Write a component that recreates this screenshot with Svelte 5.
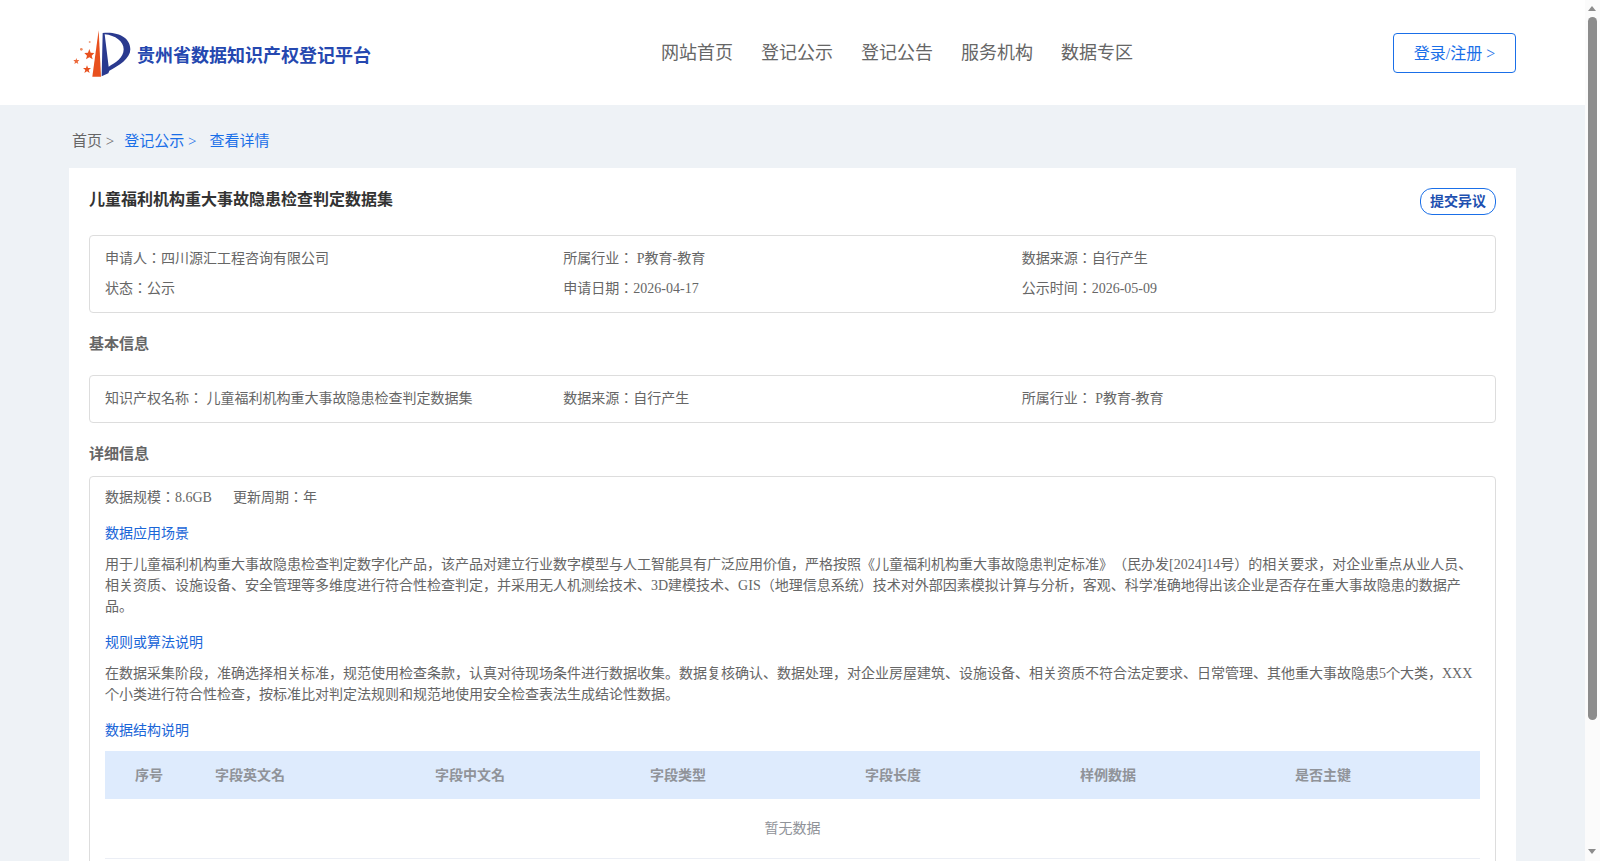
<script lang="ts">
	const navItems = ['网站首页', '登记公示', '登记公告', '服务机构', '数据专区'];
	const columns = ['序号', '字段英文名', '字段中文名', '字段类型', '字段长度', '样例数据', '是否主键'];
</script>

<div class="page">
	<header class="header">
		<div class="brand">
			<svg class="logo" viewBox="20 20 180 150" width="60" height="50" aria-hidden="true">
				<path d="M100 27 L107 166 L81 166 Z" fill="#e8501e" />
				<path d="M112 35 C160 30 195 50 195 84 C195 112 160 134 132 148 L129 156 L109 165 Z M118 39 L130 136 C150 124 175 110 175 84 C175 60 150 42 118 39 Z" fill="#2a3a8f" fill-rule="evenodd" />
				<path d="M72 83 L76 94 L87 95 L79 103 L82 114 L72 108 L62 114 L65 103 L57 95 L68 94 Z" fill="#e8501e" />
				<path d="M33 110 L35 116 L42 116 L37 121 L39 128 L33 124 L27 128 L29 121 L24 116 L31 116 Z" fill="#ec6a3c" />
				<path d="M65 132 L68 140 L77 140 L70 146 L73 155 L65 150 L57 155 L60 146 L53 140 L62 140 Z" fill="#e8501e" />
				<circle cx="48" cy="84" r="4" fill="#ee8a60" />
				<circle cx="73" cy="62" r="3" fill="#f0a080" />
			</svg>
			<span class="brand-name">贵州省数据知识产权登记平台</span>
		</div>

		<nav class="nav">
			{#each navItems as item}
				<span>{item}</span>
			{/each}
		</nav>

		<button class="login">登录/注册 &gt;</button>
	</header>

	<main class="main">
		<div class="crumbs">
			<span>首页 &gt;</span>
			<span class="link">登记公示 &gt;</span>
			<span class="link current">查看详情</span>
		</div>

		<section class="card">
			<div class="title-row">
				<h1>儿童福利机构重大事故隐患检查判定数据集</h1>
				<button class="objection">提交异议</button>
			</div>

			<div class="box info-grid">
				<div>申请人：四川源汇工程咨询有限公司</div>
				<div>所属行业： P教育-教育</div>
				<div>数据来源：自行产生</div>
				<div>状态：公示</div>
				<div>申请日期：2026-04-17</div>
				<div>公示时间：2026-05-09</div>
			</div>

			<h2 class="basic">基本信息</h2>
			<div class="box info-grid">
				<div>知识产权名称： 儿童福利机构重大事故隐患检查判定数据集</div>
				<div>数据来源：自行产生</div>
				<div>所属行业： P教育-教育</div>
			</div>

			<h2 class="detail">详细信息</h2>
			<div class="box detail-box">
				<div class="stats">
					<span>数据规模：8.6GB</span>
					<span>更新周期：年</span>
				</div>

				<h3 class="first">数据应用场景</h3>
				<p>用于儿童福利机构重大事故隐患检查判定数字化产品，该产品对建立行业数字模型与人工智能具有广泛应用价值，严格按照《儿童福利机构重大事故隐患判定标准》（民办发[2024]14号）的相关要求，对企业重点从业人员、相关资质、设施设备、安全管理等多维度进行符合性检查判定，并采用无人机测绘技术、3D建模技术、GIS（地理信息系统）技术对外部因素模拟计算与分析，客观、科学准确地得出该企业是否存在重大事故隐患的数据产品。</p>

				<h3>规则或算法说明</h3>
				<p>在数据采集阶段，准确选择相关标准，规范使用检查条款，认真对待现场条件进行数据收集。数据复核确认、数据处理，对企业房屋建筑、设施设备、相关资质不符合法定要求、日常管理、其他重大事故隐患5个大类，XXX个小类进行符合性检查，按标准比对判定法规则和规范地使用安全检查表法生成结论性数据。</p>

				<h3 class="third">数据结构说明</h3>
				<div class="table">
					<div class="thead">
						{#each columns as col}
							<span>{col}</span>
						{/each}
					</div>
					<div class="empty">暂无数据</div>
				</div>
			</div>
		</section>
	</main>
</div>

<!-- drawn because the headless browser hides the real one -->
<div class="scrollbar" aria-hidden="true">
	<span class="arrow up"></span>
	<span class="thumb"></span>
	<span class="arrow down"></span>
</div>

<style>
	:global(body) {
		background: #eef2f6;
		font-family: 'Liberation Serif', 'Noto Sans CJK JP', serif;
		font-size: 14px;
		color: #666;
		text-spacing-trim: space-all;
	}

	.page {
		padding-right: 15px;
	}

	.scrollbar {
		position: fixed;
		top: 0;
		right: 0;
		bottom: 0;
		width: 15px;
		background: #fbfbfb;
	}

	.thumb {
		position: absolute;
		top: 17px;
		left: 3px;
		width: 9px;
		height: 703px;
		border-radius: 5px;
		background: #8c8c8c;
	}

	.arrow {
		position: absolute;
		left: 3px;
		border-left: 4.5px solid transparent;
		border-right: 4.5px solid transparent;
	}

	.arrow.up {
		top: 6px;
		border-bottom: 5px solid #8c8c8c;
	}

	.arrow.down {
		bottom: 7px;
		border-top: 5px solid #8c8c8c;
	}

	.header {
		display: flex;
		align-items: center;
		height: 105px;
		padding: 0 69px 0 72px;
		background: #fff;
	}

	.brand {
		display: flex;
		align-items: center;
		gap: 5px;
	}

	.brand-name {
		font-size: 18px;
		font-weight: 700;
		color: #2548b0;
		position: relative;
		top: 1px;
	}

	.nav {
		display: flex;
		gap: 28px;
		margin-left: 290px;
		padding-bottom: 4px;
		font-size: 18px;
		color: #666;
	}

	.login {
		margin-left: auto;
		width: 123px;
		height: 40px;
		padding: 0 0 2px;
		font: inherit;
		font-size: 16px;
		color: #1a6fe8;
		background: #fff;
		border: 1px solid #1a6fe8;
		border-radius: 4px;
	}

	.main {
		margin: 0 69px;
		padding-bottom: 30px;
	}

	.crumbs {
		display: flex;
		gap: 10px;
		padding: 26px 0 17px 3px;
		font-size: 15px;
		line-height: 20px;
	}

	.link {
		color: #1a6fe8;
	}

	.current {
		margin-left: 3px;
	}

	.card {
		padding: 20px;
		background: #fff;
	}

	.title-row {
		display: flex;
		justify-content: space-between;
		align-items: center;
		height: 27px;
		margin-bottom: 20px;
	}

	h1 {
		margin: 0;
		padding: 0 0 7px 0;
		font-size: 16px;
		font-weight: 700;
		color: #333;
	}

	.objection {
		width: 76px;
		height: 27px;
		padding: 0 0 3px;
		font: inherit;
		font-weight: 700;
		color: #1e50b0;
		background: #fff;
		border: 1px solid #1a6fe8;
		border-radius: 12px;
	}

	.box {
		border: 1px solid #ddd;
		border-radius: 4px;
		padding: 8px 15px;
	}

	.info-grid {
		display: grid;
		grid-template-columns: repeat(3, 1fr);
		line-height: 30px;
	}

	h2 {
		margin: 21px 0 21px;
		font-size: 15px;
		font-weight: 700;
		line-height: 20px;
		color: #666;
	}

	h2.detail {
		margin: 21px 0 12px;
	}

	.detail-box {
		padding-top: 11px;
		padding-bottom: 100px;
	}

	.stats {
		display: flex;
		gap: 21px;
		line-height: 20px;
	}

	h3 {
		margin: 16px 0 10px;
		font-size: 14px;
		font-weight: 400;
		line-height: 20px;
		color: #1a66d8;
	}

	p {
		margin: 0;
		line-height: 21px;
	}

	.thead {
		display: grid;
		grid-template-columns: 110px 220px repeat(4, 215px) 1fr;
		align-items: center;
		height: 48px;
		padding-bottom: 2px;
		box-sizing: border-box;
		font-weight: 700;
		color: #909399;
		background: #deebfd;
	}

	.thead span:first-child {
		padding-left: 30px;
	}

	.empty {
		height: 59px;
		line-height: 60px;
		text-align: center;
		color: #909399;
		border-bottom: 1px solid #ebeef5;
	}
</style>
